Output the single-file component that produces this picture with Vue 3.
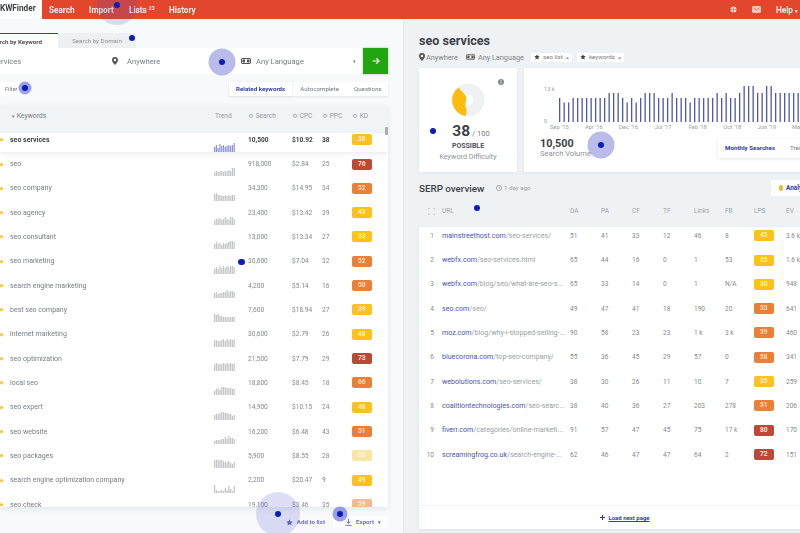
<script setup>
const keywords = [
  ['seo services', '10,500', '$10.92', 38, 38, 'y', [5,7,4,8,6,7,5,6,7,6,7,9]],
  ['seo', '918,000', '$2.84', 25, 76, 'r', [4,5,4,5,5,4,5,5,6,5,8,8]],
  ['seo company', '34,300', '$14.95', 34, 52, 'o', [7,8,6,6,5,5,6,5,6,5,6,6]],
  ['seo agency', '23,400', '$13.42', 39, 43, 'y', [5,6,6,7,5,6,8,6,5,8,8,6]],
  ['seo consultant', '13,000', '$13.34', 27, 33, 'y', [5,7,5,6,4,6,5,6,7,8,8,7]],
  ['seo marketing', '30,600', '$7.04', 32, 52, 'o', [5,7,5,8,6,8,6,8,7,8,8,7]],
  ['search engine marketing', '4,200', '$5.14', 16, 50, 'o', [5,6,4,5,5,6,6,8,6,7,7,6]],
  ['best seo company', '7,600', '$18.94', 27, 39, 'y', [8,7,8,6,6,5,5,5,5,5,5,5]],
  ['internet marketing', '30,600', '$2.79', 26, 48, 'y', [7,7,6,6,7,8,6,8,7,8,7,8]],
  ['seo optimization', '21,500', '$7.79', 29, 73, 'r', [7,8,7,7,7,8,7,8,7,8,7,8]],
  ['local seo', '18,800', '$8.45', 18, 66, 'o', [4,6,7,5,8,8,8,7,7,7,6,6]],
  ['seo expert', '14,900', '$10.15', 24, 48, 'y', [5,6,6,7,8,8,7,7,6,6,4,5]],
  ['seo website', '16,200', '$6.48', 43, 51, 'o', [3,4,4,4,5,5,7,5,8,6,6,5]],
  ['seo packages', '5,900', '$8.55', 28, 33, 'p', [8,8,8,8,8,7,6,6,7,5,4,6]],
  ['search engine optimization company', '2,200', '$20.47', 9, 49, 'y', [8,3,2,2,3,2,5,3,7,4,2,7]],
  ['seo check', '19,100', '$3.46', 35, 59, 'f', [5,6,7,5,6,7,5,6,7,6,5,6]],
]
const serp = [
  [1, 'mainstreethost.com', '/seo-services/', 51, 41, 33, 12, 46, 8, 45, 'y', '3.6 k'],
  [2, 'webfx.com', '/seo-services.html', 65, 44, 16, 0, 1, 53, 35, 'y', '1.6 k'],
  [3, 'webfx.com', '/blog/seo/what-are-seo-s...', 65, 33, 14, 0, 1, 'N/A', 30, 'y', 948],
  [4, 'seo.com', '/seo/', 49, 47, 41, 18, 190, 20, 53, 'o', 641],
  [5, 'moz.com', '/blog/why-i-stopped-selling-...', 90, 58, 23, 23, '1 k', '3 k', 59, 'o', 460],
  [6, 'bluecorona.com', '/top-seo-company/', 55, 36, 45, 29, 57, 0, 58, 'o', 341],
  [7, 'webolutions.com', '/seo-services/', 38, 30, 26, 11, 10, 7, 35, 'y', 259],
  [8, 'coalitiontechnologies.com', '/seo-searc...', 38, 40, 36, 27, 203, 278, 51, 'o', 206],
  [9, 'fiverr.com', '/categories/online-marketi...', 91, 57, 47, 45, 75, '17 k', 80, 'r', 170],
  [10, 'screamingfrog.co.uk', '/search-engine-...', 62, 46, 47, 47, 64, 2, 72, 'r', 151],
]
const volume = [24,19.5,19.5,24,24,24,24,24,24,24,24,29,29,29,24,19.5,24,19.5,24,29,29,29,24,24,24,29,24,24,24,19.5,24,24,24,24,24,29,24,29,24,24,29,36,36,36,29,29,36,36,29,29,29,29,29,29]
const months = ["Sep '15", "Apr '16", "Dec '16", "Jul '17", "Feb '18", "Oct '18", "Jun '19", "Mar '20"]
const dots = [
  { x: 117, y: 5, halo: 40, faint: true },
  { x: 132, y: 38, halo: 0 },
  { x: 222, y: 62, halo: 27 },
  { x: 25, y: 88, halo: 13, strong: true },
  { x: 433, y: 131, halo: 0 },
  { x: 601, y: 145, halo: 27 },
  { x: 477, y: 208, halo: 0 },
  { x: 241.5, y: 262, halo: 0 },
  { x: 278, y: 514, halo: 44, faint: true },
  { x: 340, y: 514, halo: 15, strong: true },
]
const star = 'M5 .5l1.4 2.9 3.1.4-2.3 2.2.6 3.1L5 7.6 2.2 9.1l.6-3.1L.5 3.8l3.1-.4z'
const dotStyle = (d) => ({ left: d.x + 'px', top: d.y + 'px' })
const haloStyle = (d) => ({ width: d.halo + 'px', height: d.halo + 'px' })
</script>

<template>
  <div class="screen">
    <div class="content">
      <header class="topbar">
        <div class="logo">KWFinder</div>
        <nav class="nav">
          <span>Search</span>
          <span>Import</span>
          <span>Lists <sup>23</sup></span>
          <span>History</span>
        </nav>
        <div class="top-right">
          <svg width="7" height="7" viewBox="0 0 7 7"><circle cx="3.5" cy="3.5" r="3" fill="#fbdcd5"/><path d="M3.5 0v7M0 3.5h7" stroke="#e2462c" stroke-width=".5"/></svg>
          <svg width="9" height="7" viewBox="0 0 9 7"><rect width="9" height="7" rx="1.4" fill="#f7c6ba"/><path d="M1.5 2l3 2 3-2" stroke="#e2462c" stroke-width=".6" fill="none"/></svg>
          <span class="help">Help <i class="caret">▾</i></span>
        </div>
      </header>

      <main class="body">
        <section class="left">
          <div class="tabs">
            <div class="tab active"><span>Search by Keyword</span></div>
            <div class="tab">Search by Domain</div>
          </div>
          <div class="search-row">
            <div class="search-box">
              <div class="field kw"><span>seo services</span></div>
              <div class="field loc">
                <svg width="6" height="8" viewBox="0 0 6 8"><path d="M3 0a3 3 0 0 0-3 3c0 2 3 5 3 5s3-3 3-5a3 3 0 0 0-3-3zm0 4.2A1.2 1.2 0 1 1 3 1.800a1.200 1.200 0 0 1 0 2.400z" fill="#555"/></svg>
                <span>Anywhere</span>
              </div>
              <div class="field lang">
                <svg width="10" height="6" viewBox="0 0 10 6"><rect x=".5" y=".5" width="9" height="5" rx=".6" fill="none" stroke="#555"/><rect x="1.500" y="1.500" width="2.500" height="3" fill="#555"/><rect x="6" y="1.500" width="2.500" height="3" fill="#555"/></svg>
                <span>Any Language</span>
                <i class="caret">▾</i>
              </div>
            </div>
            <button class="go" aria-label="Search">
              <svg width="8" height="8" viewBox="0 0 8 8"><path d="M.5 4h6.500M4.200 1.200 7 4 4.200 6.800" stroke="#fff" stroke-width="1.200" fill="none"/></svg>
            </button>
          </div>
          <div class="filter-row">
            <div class="filter">Filter</div>
            <div class="segments">
              <span class="seg on">Related keywords</span>
              <span class="seg">Autocomplete</span>
              <span class="seg">Questions</span>
            </div>
          </div>

          <div class="kw-card">
            <div class="kw-grid kw-head">
              <span></span>
              <span class="kw-title"><i class="caret">▾</i> Keywords</span>
              <span class="trend-label">Trend</span>
              <span>≎ Search</span>
              <span>≎ CPC</span>
              <span>≎ PPC</span>
              <span>≎ KD</span>
            </div>
            <div class="scrollthumb"></div>
            <div
              v-for="(k, i) in keywords"
              :key="k[0]"
              class="kw-grid kw-row"
              :class="{ first: i === 0 }"
            >
              <svg class="star" width="5" height="5" viewBox="0 0 10 10"><path :d="star" fill="#fbc02d"/></svg>
              <span class="kw-name">{{ k[0] }}</span>
              <svg class="bars" width="21" height="9" viewBox="0 0 21 9">
                <rect
                  v-for="(b, j) in k[6]"
                  :key="j"
                  :x="j * 1.78"
                  :y="9 - b"
                  width="1.25"
                  :height="b"
                />
              </svg>
              <span>{{ k[1] }}</span>
              <span>{{ k[2] }}</span>
              <span>{{ k[3] }}</span>
              <span class="badge" :class="k[5]">{{ k[4] }}</span>
            </div>
          </div>

          <div class="actions">
            <span class="act">
              <svg width="7" height="7" viewBox="0 0 10 10"><path :d="star" fill="#5a62bb"/></svg>
              Add to list
            </span>
            <span class="act export">
              <svg width="7" height="7" viewBox="0 0 8 8"><path d="M4 0v4.500M2 3l2 2.200L6 3M.5 7.300h7" stroke="#5a62bb" fill="none"/></svg>
              Export <i class="caret">▾</i>
            </span>
          </div>
        </section>

        <section class="right">
          <h1 class="title">seo services</h1>
          <div class="meta">
            <svg class="m-pin" width="6" height="8" viewBox="0 0 6 8"><path d="M3 0a3 3 0 0 0-3 3c0 2 3 5 3 5s3-3 3-5a3 3 0 0 0-3-3zm0 4.200A1.200 1.200 0 1 1 3 1.800a1.200 1.200 0 0 1 0 2.400z" fill="#555"/></svg>
            <span class="m-text">Anywhere</span>
            <svg class="m-lang" width="9" height="6" viewBox="0 0 10 6"><rect x=".5" y=".5" width="9" height="5" rx=".6" fill="none" stroke="#555"/><rect x="1.500" y="1.500" width="2.500" height="3" fill="#555"/><rect x="6" y="1.500" width="2.500" height="3" fill="#555"/></svg>
            <span class="m-text">Any Language</span>
            <span class="chip first-chip"><svg width="6" height="6" viewBox="0 0 10 10"><path :d="star" fill="#444"/></svg>seo list<b>×</b></span>
            <span class="chip"><svg width="6" height="6" viewBox="0 0 10 10"><path :d="star" fill="#444"/></svg>keywords<b>×</b></span>
          </div>

          <div class="cards">
            <div class="card kd">
              <svg class="info" width="6" height="6" viewBox="0 0 6 6"><circle cx="3" cy="3" r="3" fill="#858a8e"/><path d="M3 2.500v2M3 1v1" stroke="#fff" stroke-width=".7"/></svg>
              <svg class="donut" width="34" height="34" viewBox="0 0 34 34">
                <circle cx="17" cy="17" r="11" fill="none" stroke="#eff1f3" stroke-width="11"/>
                <path d="M7.500 4.500A16 16 0 0 0 14.500 33C16 29 16 26 14 22.500 C15 18 16 15 14.500 12.500 C12 9.500 9.500 7 7.500 4.500Z" fill="#fdbb0d"/>
              </svg>
              <div class="score"><strong>38</strong><span> / 100</span></div>
              <div class="possible">POSSIBLE</div>
              <div class="kd-label">Keyword Difficulty</div>
            </div>

            <div class="card vol">
              <div class="chart">
                <div class="axis"><span>13 k</span><span>0</span></div>
                <svg class="vbars" width="245" height="36" viewBox="0 0 245 36">
                  <rect
                    v-for="(v, i) in volume"
                    :key="i"
                    :x="i * 4.5"
                    :y="36 - v"
                    width="1.3"
                    :height="v"
                  />
                </svg>
              </div>
              <div class="months"><span v-for="m in months" :key="m">{{ m }}</span></div>
              <div class="vol-bottom">
                <div>
                  <div class="vol-num">10,500</div>
                  <div class="vol-label">Search Volume</div>
                </div>
                <div class="vol-tabs">
                  <span class="vt-on">Monthly Searches</span>
                  <span>Trends</span>
                </div>
              </div>
            </div>
          </div>

          <div class="serp-head">
            <h2>SERP overview</h2>
            <svg width="6" height="6" viewBox="0 0 6 6"><circle cx="3" cy="3" r="2.600" fill="none" stroke="#888" stroke-width=".6"/><path d="M3 1.500V3l1 .6" stroke="#888" stroke-width=".5" fill="none"/></svg>
            <span class="ago">1 day ago</span>
            <div class="analyze"><i class="yellow-dot"></i>Analyze</div>
          </div>

          <div class="s-grid s-head">
            <svg class="expand" width="7" height="7" viewBox="0 0 7 7"><path d="M0 2V0h2M5 0h2v2M7 5v2H5M2 7H0V5" stroke="#b0b5b9" stroke-width=".7" fill="none"/></svg>
            <span></span>
            <span>URL</span><span>DA</span><span>PA</span><span>CF</span><span>TF</span><span>Links</span><span>FB</span><span>LPS</span><span>EV</span>
          </div>
          <div class="s-table">
            <div v-for="(r, i) in serp" :key="r[0]" class="s-grid s-row" :class="{ first: i === 0 }">
              <span class="num">{{ r[0] }}</span>
              <span></span>
              <span class="url"><a>{{ r[1] }}</a>{{ r[2] }}</span>
              <span>{{ r[3] }}</span>
              <span>{{ r[4] }}</span>
              <span>{{ r[5] }}</span>
              <span>{{ r[6] }}</span>
              <span>{{ r[7] }}</span>
              <span>{{ r[8] }}</span>
              <span class="badge" :class="r[10]">{{ r[9] }}</span>
              <span>{{ r[11] }}</span>
            </div>
            <div class="load">
              <svg width="5" height="5" viewBox="0 0 5 5"><path d="M2.500 0v5M0 2.500h5" stroke="#2b3a9e" stroke-width="1.100"/></svg>
              <a>Load next page</a>
            </div>
          </div>
        </section>
      </main>
    </div>

    <div v-for="(d, i) in dots" :key="i" class="dot" :style="dotStyle(d)">
      <i
        v-if="d.halo"
        class="halo"
        :class="{ faint: d.faint, strong: d.strong }"
        :style="haloStyle(d)"
      ></i>
      <i class="core"></i>
    </div>
  </div>
</template>

<style scoped>
.screen {
  position: relative;
  width: 800px;
  height: 533px;
  overflow: hidden;
  background: #eef2f5;
  font-family: Roboto, "Liberation Sans", sans-serif;
  color: #73787d;
}
.content {
  display: flex;
  flex-direction: column;
  height: 533px;
  filter: blur(0.45px);
}
i { font-style: normal; }
.caret { font-size: 5px; }

.topbar {
  display: flex;
  align-items: center;
  height: 19px;
  flex: none;
  background: #e2462c;
  color: #fdeee9;
  font-size: 8.200px;
  font-weight: 700;
  position: relative;
  z-index: 2;
}
.logo {
  width: 42px;
  height: 19px;
  line-height: 17px;
  background: #fff;
  color: #3f4347;
  font-size: 8.200px;
  white-space: nowrap;
  overflow: hidden;
}
.nav {
  display: flex;
  padding-left: 7px;
}
.nav span { width: 40px; white-space: nowrap; }
.nav sup { font-size: 5px; line-height: 0; vertical-align: 3px; }
.top-right {
  margin-left: auto;
  display: flex;
  align-items: center;
  gap: 15px;
  margin-right: 2px;
}
.help { white-space: nowrap; }

.body {
  flex: 1;
  display: flex;
  min-height: 0;
}

.left {
  width: 403px;
  flex: none;
  padding-top: 14px;
  background: #f7f9fa;
  overflow: hidden;
  box-sizing: border-box;
  box-shadow: 1px 0 2px rgba(120, 130, 140, .08);
  position: relative;
  z-index: 1;
}
.tabs {
  display: flex;
  height: 15px;
}
.tab {
  width: 78px;
  background: #eef1f4;
  font-size: 6.200px;
  line-height: 17px;
  text-align: center;
  color: #8b9095;
}
.tab.active {
  width: 58px;
  background: #fff;
  color: #4a4e52;
  font-weight: 700;
  text-align: left;
  border-top: 1px solid #3442a5;
  box-sizing: border-box;
  white-space: nowrap;
  line-height: 16px;
}
.tab.active span { margin-left: -11px; }
.search-row {
  display: flex;
  height: 26px;
  width: 388px;
}
.search-box {
  display: flex;
  align-items: center;
  background: #fff;
  width: 363px;
  font-size: 7.600px;
  color: #777c80;
}
.field {
  display: flex;
  align-items: center;
  white-space: nowrap;
}
.field.kw { width: 112px; }
.field.kw span { margin-left: -21px; }
.field.loc { width: 129px; gap: 9px; }
.field.lang { flex: 1; gap: 5px; padding-right: 7px; }
.field.lang .caret { margin-left: auto; }
.go {
  width: 25px;
  padding: 0;
  border: 0;
  background: #22a511;
  box-shadow: 0 0 2px rgba(90, 200, 70, .7);
  display: flex;
  align-items: center;
  justify-content: center;
}
.filter-row {
  display: flex;
  justify-content: space-between;
  width: 388px;
  height: 14px;
  margin-top: 8px;
  font-size: 6.200px;
  line-height: 14px;
}
.filter {
  width: 30px;
  padding-left: 5px;
  box-sizing: border-box;
  background: #fff;
  font-size: 5.600px;
}
.segments {
  display: flex;
  background: #fff;
  width: 159px;
  box-shadow: 0 1px 2px rgba(120, 130, 140, .15);
}
.seg { padding-left: 15px; white-space: nowrap; }
.seg.on {
  padding: 0 7px 0 7px;
  color: #2f3ca3;
  font-weight: 700;
  box-shadow: 1px 0 2px rgba(120, 130, 140, .12);
}
.seg.on + .seg { padding-left: 8px; }

.kw-card {
  position: relative;
  width: 388px;
  height: 402px;
  margin-top: 9px;
  overflow: hidden;
  background: #fff;
  box-shadow: 0 2px 5px rgba(120, 130, 140, .14);
  font-size: 6.600px;
}
.kw-grid {
  display: grid;
  grid-template-columns: 10px 204px 34px 44px 30px 30px 1fr;
  align-items: start;
}
.kw-head {
  height: 28px;
  background: #f1f4f6;
  line-height: 23px;
  color: #94999d;
}
.kw-title { padding-left: 2px; color: #777c80; font-size: 6.800px; }
.trend-label { padding-left: 1px; }
.scrollthumb {
  position: absolute;
  top: 22px;
  left: 385px;
  width: 3px;
  height: 8px;
  background: #a9adb1;
  border-radius: 1px;
}
.kw-row {
  height: 24.330px;
  box-sizing: border-box;
  padding-top: 7px;
  line-height: 10px;
  color: #85898d;
}
.kw-row.first {
  height: 19px;
  padding-top: 1.500px;
  position: relative;
  color: #3f4347;
  font-weight: 700;
  box-shadow: 0 2px 4px rgba(120, 130, 140, .14);
}
.star { margin: 2.500px 0 0 -1px; }
.kw-name { font-size: 7px; color: #777c80; white-space: nowrap; }
.first .kw-name { color: #3f4347; }
.bars {
  align-self: end;
  display: block;
  fill: #c3c5c8;
}
.first .bars { fill: #8e94d9; }
.badge {
  display: block;
  width: 19.500px;
  height: 11px;
  line-height: 11px;
  border-radius: 2px;
  color: #fff;
  font-size: 6.600px;
  font-weight: 700;
  text-align: center;
  opacity: .95;
}
.kw-row .badge { margin-top: -.500px; }
.badge.y { background: #fdbe10; color: #fdeeb8; }
.badge.o { background: #e9792b; color: #fbdcc3; }
.badge.r { background: #b8402a; color: #f8e3dc; }
.badge.p { background: #fbe49f; color: #fdf5d9; }
.badge.f { background: #f2b690; color: #fbe5d6; }

.actions {
  display: flex;
  justify-content: flex-end;
  width: 388px;
  height: 12px;
  margin-top: 9px;
  font-size: 6.200px;
  line-height: 12px;
  font-weight: 700;
  color: #6d74c3;
}
.act { display: flex; align-items: center; gap: 4px; white-space: nowrap; }
.export {
  width: 55px;
  margin-left: 8px;
  padding-left: 12px;
  box-sizing: border-box;
  background: #fbfcfc;
}

.right {
  flex: 1;
  min-width: 0;
  padding-left: 16px;
  overflow: hidden;
  background: #eef2f5;
}
.title {
  margin: 14px 0 0;
  font-size: 12.600px;
  line-height: 16px;
  font-weight: 700;
  color: #3c4146;
}
.meta {
  display: flex;
  align-items: center;
  height: 12px;
  margin-top: 2px;
  white-space: nowrap;
}
.m-text { font-size: 7.300px; color: #7f8488; margin-left: 1px; }
.m-pin { margin-right: 0; }
.m-lang { margin-left: 8px; margin-right: 2px; }
.chip {
  display: flex;
  align-items: center;
  gap: 3px;
  height: 9px;
  padding: 0 3px;
  margin-left: 5px;
  background: #fff;
  border-radius: 2px;
  font-size: 6.200px;
  color: #777c80;
}
.first-chip { margin-left: 7px; }
.chip b { font-weight: 400; font-size: 6px; }

.cards {
  display: flex;
  gap: 7px;
  margin-top: 5px;
  height: 104px;
}
.card {
  background: #fff;
  box-shadow: 0 1px 3px rgba(120, 130, 140, .12);
  border-radius: 1px;
  flex: none;
}
.kd {
  position: relative;
  width: 98px;
  text-align: center;
  padding-top: 15px;
  box-sizing: border-box;
}
.info { position: absolute; top: 11px; right: 13px; }
.donut { display: block; margin: 0 auto; }
.score { margin-top: 5px; line-height: 17px; color: #3c4146; padding-left: 6px; }
.score strong { font-size: 15.500px; }
.score span { font-size: 7.500px; color: #777c80; }
.possible { font-size: 7px; font-weight: 700; line-height: 9px; color: #4e5357; margin-top: -.500px; }
.kd-label { font-size: 7.200px; line-height: 10px; margin-top: 1px; color: #8e9397; }

.vol {
  width: 300px;
  overflow: hidden;
}
.chart {
  display: flex;
  height: 39px;
  margin-top: 18px;
  padding-left: 20px;
}
.axis {
  width: 15px;
  flex: none;
  display: flex;
  flex-direction: column;
  justify-content: space-between;
  font-size: 5.600px;
  line-height: 7px;
  color: #9a9ea2;
  white-space: nowrap;
}
.vbars {
  flex: none;
  fill: #4e58ad;
}
.months {
  display: flex;
  padding-left: 18px;
  margin-top: -1px;
  font-size: 5.800px;
  line-height: 7px;
  color: #9a9ea2;
}
.months span { width: 34.600px; flex: none; text-align: center; white-space: nowrap; }
.vol-bottom {
  display: flex;
  padding-left: 16px;
  margin-top: 5.500px;
}
.vol-bottom > div:first-child { width: 178px; flex: none; }
.vol-num { font-size: 10.800px; font-weight: 700; line-height: 13px; color: #3c4146; }
.vol-label { font-size: 7.600px; line-height: 10px; margin-top: -.500px; color: #8e9397; }
.vol-tabs {
  display: flex;
  gap: 15px;
  height: 20px;
  margin-top: 1.500px;
  padding-left: 7px;
  width: 120px;
  flex: none;
  box-sizing: border-box;
  align-items: center;
  font-size: 6.200px;
  white-space: nowrap;
  box-shadow: 0 1px 3px rgba(120, 130, 140, .22);
}
.vt-on { color: #2f3ca3; font-weight: 700; }

.serp-head {
  display: flex;
  align-items: center;
  height: 16px;
  margin-top: 8px;
  white-space: nowrap;
}
.serp-head h2 {
  margin: 0 5px 0 0;
  font-size: 9.800px;
  font-weight: 500;
  color: #3c4146;
  width: 72px;
}
.ago { margin-left: 2px; font-size: 6.200px; color: #9a9ea2; }
.analyze {
  margin-left: auto;
  width: 29px;
  height: 16px;
  overflow: hidden;
  display: flex;
  align-items: center;
  gap: 3px;
  padding-left: 8px;
  box-sizing: border-box;
  background: #fff;
  border-radius: 3px 0 0 3px;
  font-size: 6.400px;
  font-weight: 700;
  color: #2f3ca3;
}
.yellow-dot {
  flex: none;
  width: 4px;
  height: 6px;
  border-radius: 50%;
  background: #e3bb2b;
}

.s-grid {
  display: grid;
  grid-template-columns: 15px 8px 128px 31px 31px 31px 31px 31px 29px 32px 40px;
  align-items: start;
  font-size: 6.500px;
}
.s-head {
  height: 31px;
  line-height: 31px;
  color: #a0a4a8;
}
.expand { margin: 12px 0 0 9px; }
.s-table {
  height: 302px;
  background: #fff;
  display: flex;
  flex-direction: column;
  box-shadow: 0 1px 3px rgba(120, 130, 140, .14);
}
.s-row {
  height: 24.330px;
  flex: none;
  box-sizing: border-box;
  padding-top: 7px;
  line-height: 10px;
  color: #85898d;
}
.s-row.first { height: 21px; padding-top: 3.700px; }
.s-row .badge { margin-top: -.500px; }
.num { text-align: right; }
.url {
  font-size: 7.100px;
  color: #9a9ea2;
  white-space: nowrap;
  overflow: hidden;
}
.url a { color: #4a55b0; }
.load {
  margin-top: auto;
  height: 24px;
  border-top: 1px solid #f1f3f5;
  box-sizing: border-box;
  display: flex;
  align-items: center;
  justify-content: center;
  gap: 3px;
  padding-left: 31px;
  font-size: 6px;
  font-weight: 700;
  color: #3442a5;
}
.load a { text-decoration: underline; }

.dot {
  position: absolute;
  width: 0;
  height: 0;
  z-index: 5;
}
.core {
  position: absolute;
  left: -3.250px;
  top: -3.250px;
  width: 6.500px;
  height: 6.500px;
  border-radius: 50%;
  background: #0a1fb5;
}
.halo {
  position: absolute;
  transform: translate(-50%, -50%);
  border-radius: 50%;
  background: rgba(60, 70, 200, .36);
}
.halo.faint { background: rgba(70, 80, 205, .18); }
.halo.strong { background: rgba(60, 70, 210, .5); }
</style>

<style>
html, body { margin: 0; padding: 0; background: #eef2f5; }
</style>
